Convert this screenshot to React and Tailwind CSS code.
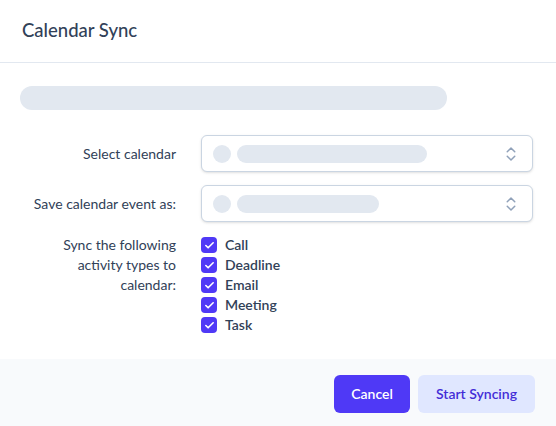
import React from 'react';
import { ChevronsUpDown, Check } from 'lucide-react';

const activityTypes = ['Call', 'Deadline', 'Email', 'Meeting', 'Task'];

function SkeletonSelect({ barWidth }) {
  return (
    <div className="h-[37px] flex items-center justify-between rounded-md border border-slate-300 bg-white pl-[11px] pr-3 shadow-sm">
      <div className="flex items-center gap-1.5">
        <div className="h-[18px] w-[18px] rounded-full bg-slate-200" />
        <div className={`h-[18px] rounded-full bg-slate-200 ${barWidth}`} />
      </div>
      <ChevronsUpDown size={18} strokeWidth={2} className="text-slate-400" />
    </div>
  );
}

export default function App() {
  return (
    <div className="w-[556px] h-[426px] bg-white flex flex-col font-['Lato',sans-serif] text-slate-700">
      <div className="h-[63px] shrink-0 border-b border-slate-200 flex items-center px-[22px]">
        <h1 className="text-[18.5px] font-medium text-slate-700">Calendar Sync</h1>
      </div>

      <div className="flex-1 pl-5 pr-[23px]">
        <div className="mt-[23px] h-6 w-[427px] rounded-full bg-slate-200" />

        <div className="mt-[25px] grid grid-cols-[156px_1fr] gap-x-[25px] gap-y-[13px] items-center text-sm">
          <label className="text-right">Select calendar</label>
          <SkeletonSelect barWidth="w-[190px]" />
          <label className="text-right">Save calendar event as:</label>
          <SkeletonSelect barWidth="w-[142px]" />
        </div>

        <div className="mt-[13px] grid grid-cols-[156px_1fr] gap-x-[25px] text-sm leading-5">
          <div className="text-right">Sync the following activity types to calendar:</div>
          <div className="flex flex-col">
            {activityTypes.map((type) => (
              <label key={type} className="flex items-center gap-2 h-5">
                <span className="h-4 w-4 rounded-[4px] bg-indigo-600 flex items-center justify-center">
                  <Check size={11} strokeWidth={3.5} className="text-white" />
                </span>
                <span className="font-semibold text-slate-700">{type}</span>
              </label>
            ))}
          </div>
        </div>
      </div>

      <div className="h-[67px] shrink-0 bg-slate-50 flex justify-end items-start gap-2 pt-4 pr-[21px]">
        <button className="h-[38px] w-[76px] rounded-md bg-indigo-600 text-sm font-semibold text-white">
          Cancel
        </button>
        <button className="h-[38px] w-[117px] rounded-md bg-indigo-100 text-sm font-semibold text-indigo-700">
          Start Syncing
        </button>
      </div>
    </div>
  );
}
